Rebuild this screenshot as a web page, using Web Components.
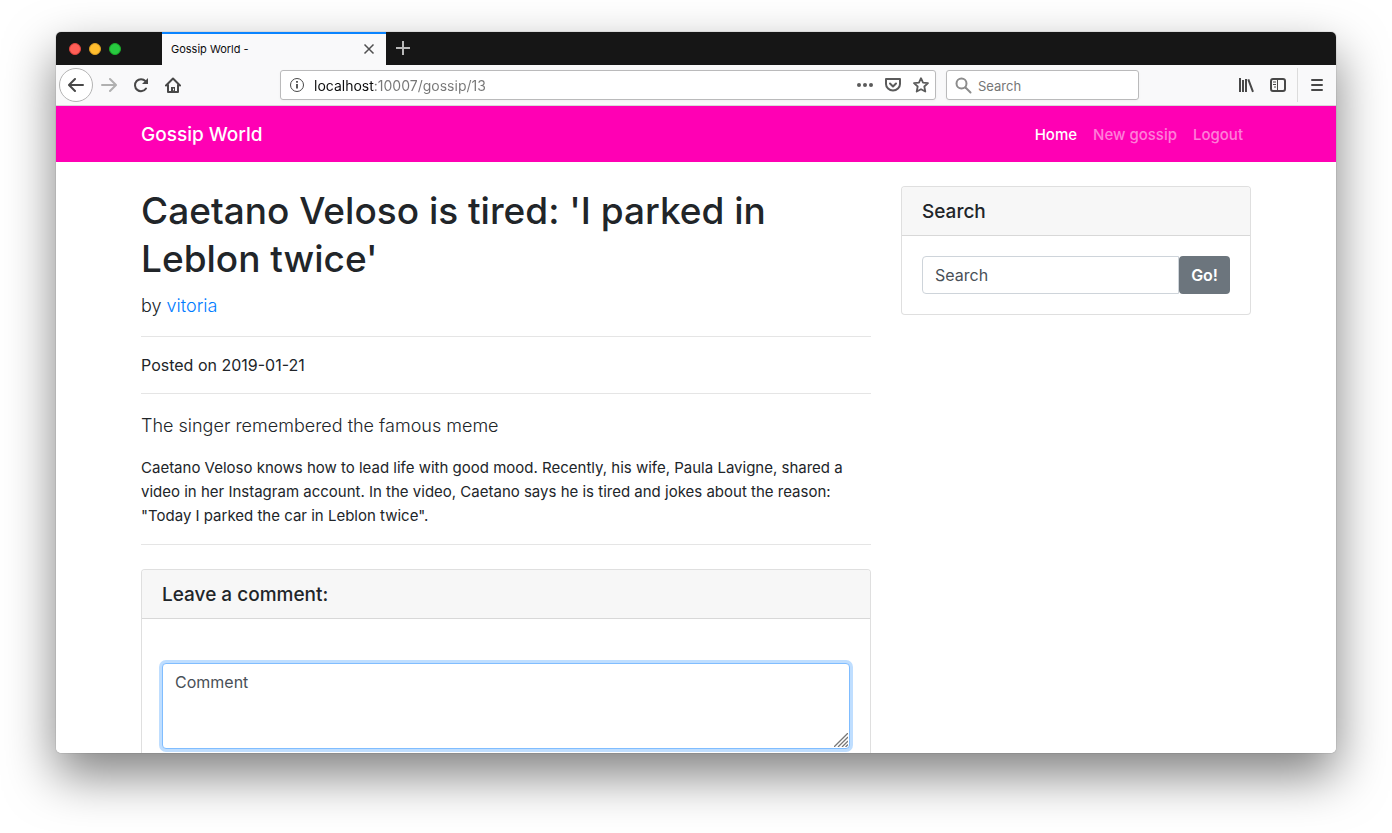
<!DOCTYPE html>
<html lang="en">
<head>
<meta charset="utf-8">
<title>Gossip World</title>
<style>
html,body{height:100%}
body{margin:0;box-sizing:border-box;padding:32px 56px 80px;background:#fff;font-family:Inter,"Open Sans",sans-serif;font-size:16px;line-height:24px;color:#212529;overflow:hidden}
</style>
</head>
<body>
<browser-window>
  <tab-strip slot="tabs" label="Gossip World -"></tab-strip>
  <browser-toolbar slot="toolbar"></browser-toolbar>
  <site-nav brand="Gossip World">
    <nav-link href="#home" active>Home</nav-link>
    <nav-link href="#new">New gossip</nav-link>
    <nav-link href="#logout">Logout</nav-link>
  </site-nav>
  <page-columns>
    <gossip-article author="vitoria" posted="2019-01-21">
      <span slot="title">Caetano Veloso is tired: 'I parked in Leblon twice'</span>
      <span slot="lead">The singer remembered the famous meme</span>
      <span slot="body">Caetano Veloso knows how to lead life with good mood. Recently, his wife, Paula Lavigne, shared a video in her Instagram account. In the video, Caetano says he is tired and jokes about the reason: "Today I parked the car in Leblon twice".</span>
    </gossip-article>
    <panel-card heading="Leave a comment:"><comment-form></comment-form></panel-card>
    <panel-card slot="aside" heading="Search"><search-form></search-form></panel-card>
  </page-columns>
</browser-window>
<script>
const define = (name, render) => customElements.define(name, class extends HTMLElement {
  connectedCallback() {
    if (this.shadowRoot) return;
    const t = document.createElement('template');
    t.innerHTML = '<style>:host,*{box-sizing:border-box}svg{display:block;fill:none;stroke:currentColor}</style>' + render(this);
    this.attachShadow({mode: 'open'}).append(t.content.cloneNode(true));
  }
});

define('browser-window', () => `
<style>
:host{display:flex;flex-direction:column;height:100%;border-radius:5px;box-shadow:0 0 1px rgba(0,0,0,.6),0 22px 50px rgba(0,0,0,.5)}
.frame{display:flex;flex-direction:column;height:100%;border-radius:5px;overflow:hidden;background:#fff}
main{flex:1;min-height:0;overflow:hidden}
</style>
<div class="frame"><slot name="tabs"></slot><slot name="toolbar"></slot><main><slot></slot></main></div>`);

define('tab-strip', el => `
<style>
:host{display:flex;height:33px;background:#161616}
button{border:0;padding:0;background:none;font:inherit}
.lights{display:flex;gap:8px;align-items:center;width:106px;padding:1px 0 0 13px}
.lights button{width:12px;height:12px;border-radius:50%;border:1px solid #e0443e;background:#ff5f57}
.lights .min{background:#ffbd2e;border-color:#dea123}
.lights .max{background:#28c940;border-color:#1aab29}
.tab{display:flex;align-items:center;justify-content:space-between;width:224px;padding:0 11px 2px 9px;background:#f9f9fa;border-top:2px solid #0a84ff;font-size:11px;line-height:16px;color:#0c0c0d}
.tab button{color:#505050}
.new{color:#b9b9b9;padding:0 10px 2px}
</style>
<div class="lights"><button aria-label="Close window"></button><button class="min" aria-label="Minimise"></button><button class="max" aria-label="Zoom"></button></div>
<div class="tab"><span>${el.getAttribute('label')}</span><button aria-label="Close tab"><svg width="12" height="12" stroke-width="1.5"><path d="M1.5 1.5l9 9m0-9l-9 9"/></svg></button></div>
<button class="new" aria-label="New tab"><svg width="14" height="14" stroke-width="2"><path d="M7 0v14M0 7h14"/></svg></button>`);

define('browser-toolbar', () => `
<style>
:host{display:flex;align-items:center;height:41px;padding:0 1px 0 3px;background:#f9f9fa;border-bottom:1px solid #d8d8d8;color:#484848}
button{display:grid;place-items:center;width:32px;height:34px;border:0;padding:0;background:none;color:inherit}
.back{width:34px;border:1px solid #b4b4b4;border-radius:50%;background:#fff}
.fwd{color:#b0b0b0}
.field{display:flex;align-items:center;height:30px;border:1px solid #bababb;border-radius:3px;background:#fff;box-shadow:0 1px 3px rgba(0,0,0,.04)}
input{flex:1;min-width:0;border:0;padding:1px 0 0;outline:0;background:none;font:13px/20px Inter,sans-serif;color:#767676}
input::placeholder{color:#767676;opacity:1}
.url{flex:1;margin-left:91px;padding-left:8px}
.url button{width:28px;height:28px;color:#5b5b5b}
#address{margin-left:9px;font-size:14px;color:#767676;background:linear-gradient(90deg,#0c0c0d 61px,#767676 61px);background-clip:text;-webkit-background-clip:text;-webkit-text-fill-color:transparent}
.find{width:193px;margin:0 91px 0 10px;padding:0 8px;gap:6px}
.find svg{color:#8c8c8c}
.side{margin-right:3px}
.menu{width:38px;border-left:1px solid #dcdcdc}
</style>
<button class="back" aria-label="Back"><svg width="16" height="16" stroke-width="2" stroke-linecap="round" stroke-linejoin="round"><path d="M15 8H1.5M7 2L1 8l6 6"/></svg></button>
<button class="fwd" aria-label="Forward"><svg width="16" height="16" stroke-width="2" stroke-linecap="round" stroke-linejoin="round"><path d="M1 8h13.500M9 2l6 6-6 6"/></svg></button>
<button aria-label="Reload"><svg width="16" height="16" stroke-width="2" stroke-linecap="round"><path d="M13 11.500A6 6 0 1 1 12.500 4.200"/><path d="M15 1v6H9z" fill="currentColor" stroke="none"/></svg></button>
<button aria-label="Home"><svg width="16" height="16" stroke-width="2" stroke-linecap="round" stroke-linejoin="round"><path d="M1 8.500L8 1.500l7 7M3 8v7h10V8"/><path d="M6 15v-5h4v5z" fill="currentColor" stroke="none"/><path d="M8.500 12v1" stroke="#f9f9fa" stroke-width="1"/></svg></button>
<div class="field url">
<svg width="16" height="16" stroke-width="1"><circle cx="8" cy="8" r="6.500"/><path d="M8 7v4.500M8 4v1.800" stroke-width="1.800"/></svg>
<input id="address" aria-label="Address" value="localhost:10007/gossip/13">
<button aria-label="Page actions"><svg width="16" height="16"><g fill="currentColor" stroke="none"><circle cx="2" cy="8" r="2"/><circle cx="8" cy="8" r="2"/><circle cx="14" cy="8" r="2"/></g></svg></button>
<button aria-label="Save to Pocket"><svg width="16" height="16" stroke-width="2" stroke-linecap="round" stroke-linejoin="round"><path d="M1 2h14v5a7 6.500 0 0 1-14 0z"/><path d="M5 6.500l3 3 3-3"/></svg></button>
<button aria-label="Bookmark"><svg width="16" height="16" stroke-width="1.800" stroke-linejoin="round"><path d="M8 1.200l2 4.500 5 .5-3.700 3.300 1 5L8 12.200l-4.300 2.300 1-5L1 6.200l5-.5z"/></svg></button>
</div>
<div class="field find"><svg width="17" height="17" stroke-width="2" stroke-linecap="round"><circle cx="6.500" cy="6.500" r="5"/><path d="M10.500 10.500l5 5"/></svg><input aria-label="Search the web" placeholder="Search"></div>
<button aria-label="Library"><svg width="16" height="16" stroke-width="2"><path d="M2 1v14M5 3v12M8 2v13M10.300 2.300l4.700 12.500"/></svg></button>
<button class="side" aria-label="Sidebar"><svg width="16" height="16" stroke-width="2"><rect x="1" y="2" width="14" height="12" rx="2"/><path d="M7.500 2v12M3 5h3M3 7.500h3M4 10h2" stroke-width="1"/></svg></button>
<button class="menu" aria-label="Menu"><svg width="12" height="16" stroke-width="2" stroke-linecap="round"><path d="M1 3h10M1 8h10M1 13h10"/></svg></button>`);

define('site-nav', el => `
<style>
:host{display:block;background:#ff00b4}
nav{display:flex;justify-content:space-between;align-items:center;height:56px;max-width:1140px;margin:0 auto;padding:0 15px}
a{padding-top:2px;color:#fff;font-size:19px;line-height:30px;font-weight:500;text-decoration:none}
div{display:flex}
</style>
<nav><a href="#home">${el.getAttribute('brand')}</a><div><slot></slot></div></nav>`);

define('nav-link', el => `
<style>
:host{display:block;padding:0 8px}
a{color:rgba(255,255,255,.5);font-size:15px;font-weight:500;text-decoration:none}
:host([active]) a{color:#fff}
</style>
<a href="${el.getAttribute('href')}"><slot></slot></a>`);

define('page-columns', () => `
<style>
:host{display:grid;grid-template-columns:minmax(0,2fr) minmax(0,1fr);max-width:1140px;margin:24px auto 0}
section,aside{padding:0 15px}
</style>
<section><slot></slot></section><aside><slot name="aside"></slot></aside>`);

define('gossip-article', el => `
<style>
:host{display:block;margin-bottom:24px}
h1{margin:0;padding:1px 0 7px;font-size:37px;line-height:48px;font-weight:500}
p{margin:0 0 16px}
.lead{padding-top:2px;font-size:18px;line-height:28px;font-weight:300}
.text{font-size:15px}
hr{margin:0 0 16px;border:0;border-top:1px solid rgba(0,0,0,.1)}
hr:last-child{margin:0}
a{color:#007bff;text-decoration:none}
</style>
<article>
<h1><slot name="title"></slot></h1>
<p class="lead">by <a href="#author">${el.getAttribute('author')}</a></p><hr>
<p>Posted on ${el.getAttribute('posted')}</p><hr>
<p class="lead"><slot name="lead"></slot></p>
<p class="text"><slot name="body"></slot></p><hr>
</article>`);

define('panel-card', el => `
<style>
:host{display:block;border:1px solid rgba(0,0,0,.125);border-radius:4px;background:#fff}
h5{margin:0;padding:13px 20px 11px;font-size:19px;line-height:24px;font-weight:500;background:#f7f7f7;border-bottom:1px solid rgba(0,0,0,.125);border-radius:3px 3px 0 0}
div{padding:20px}
</style>
<h5>${el.getAttribute('heading')}</h5><div><slot></slot></div>`);

define('search-form', () => `
<style>
:host{display:block}
form{display:flex}
input{flex:1;min-width:0;height:38px;padding:6px 12px;border:1px solid #ced4da;border-radius:4px 0 0 4px;font:inherit;color:#495057}
input::placeholder{color:#495057;opacity:1}
button{height:38px;padding:6px 12px;border:0;border-radius:4px;background:#6c757d;color:#fff;font:inherit;font-weight:600}
</style>
<form><input aria-label="Search gossips" placeholder="Search"><button type="button">Go!</button></form>`);

define('comment-form', () => `
<style>
:host{display:block;padding-top:24px}
.box{position:relative}
textarea{display:block;width:100%;height:86px;padding:6px 12px;border:1px solid #80bdff;border-radius:4px;outline:0;box-shadow:0 0 0 3px #bfdeff;resize:none;font:inherit;color:#495057}
textarea::placeholder{color:#495057;opacity:1}
svg{position:absolute;right:2px;bottom:2px;color:#777}
</style>
<form class="box"><textarea aria-label="Comment" placeholder="Comment"></textarea><svg width="14" height="14" stroke-width="1.300"><path d="M0 14L14 0M4 14L14 4M8 14l6-6M11.500 14l2.500-2.500"/></svg></form>`);
</script>
</body>
</html>
